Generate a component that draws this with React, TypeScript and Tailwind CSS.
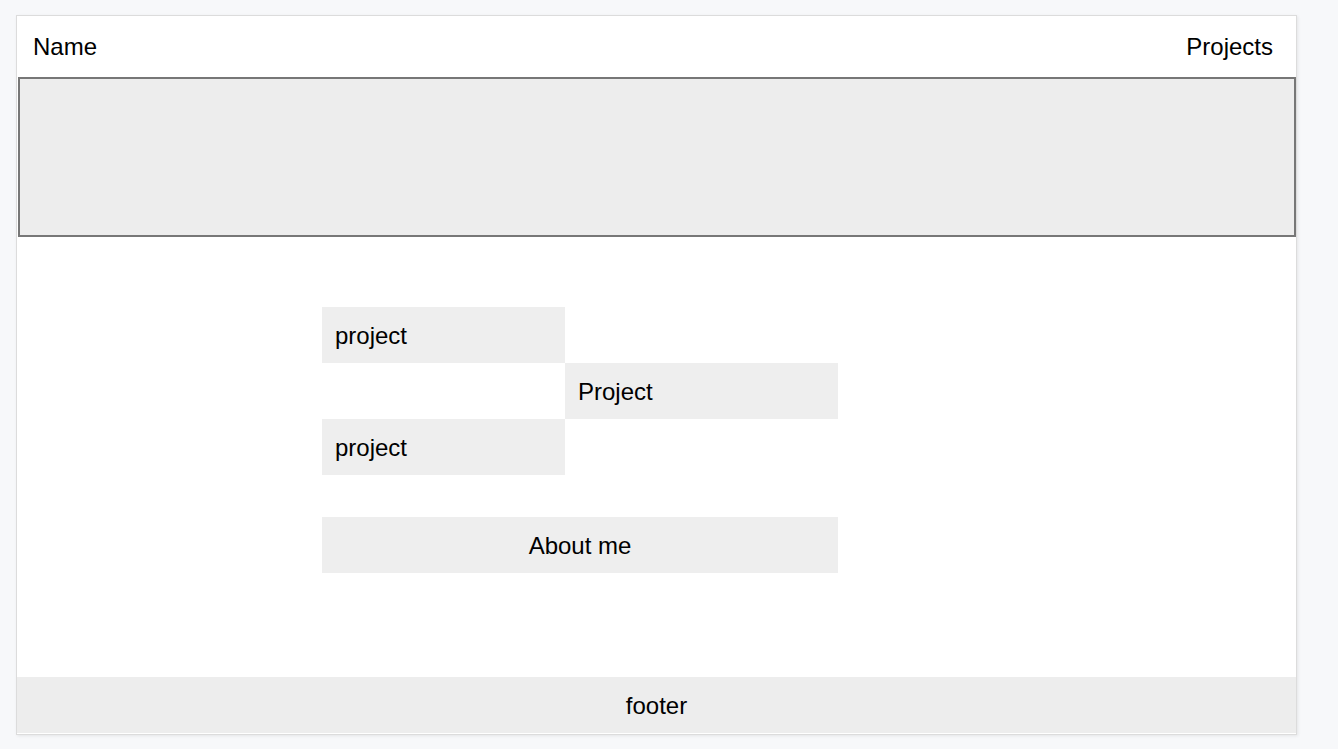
export default function App() {
  return (
    <div className="min-h-screen bg-[#f7f8fa] pl-[16px] pt-[15px] font-['Liberation_Sans',Arial,sans-serif] text-black">
      <div className="flex h-[720px] w-[1281px] flex-col border border-[#dcdcdc] bg-white shadow-[1px_1px_3px_rgba(0,0,0,0.08)]">
        <header className="flex h-[61px] items-center justify-between pl-[16px] pr-[23px] pt-[1px] text-[24px]">
          <span>Name</span>
          <span>Projects</span>
        </header>

        <section className="ml-[1px] h-[160px] border-2 border-[#777777] bg-[#ededed]" />

        <main className="flex-1 pl-[305px] pt-[70px] text-[24px]">
          <div className="grid w-[516px] grid-cols-[243px_273px]">
            <div className="flex h-[56px] items-center bg-[#eeeeee] px-[13px] pt-[1px]">project</div>
            <div />
            <div />
            <div className="flex h-[56px] items-center bg-[#eeeeee] px-[13px] pt-[1px]">Project</div>
            <div className="flex h-[56px] items-center bg-[#eeeeee] px-[13px] pt-[1px]">project</div>
            <div />
          </div>
          <div className="mt-[42px] flex h-[56px] w-[516px] items-center justify-center bg-[#eeeeee] pt-[1px]">About me</div>
        </main>

        <footer className="mb-[1px] flex h-[56px] items-center justify-center bg-[#ededed] pt-[2px] text-[24px]">footer</footer>
      </div>
    </div>
  )
}
